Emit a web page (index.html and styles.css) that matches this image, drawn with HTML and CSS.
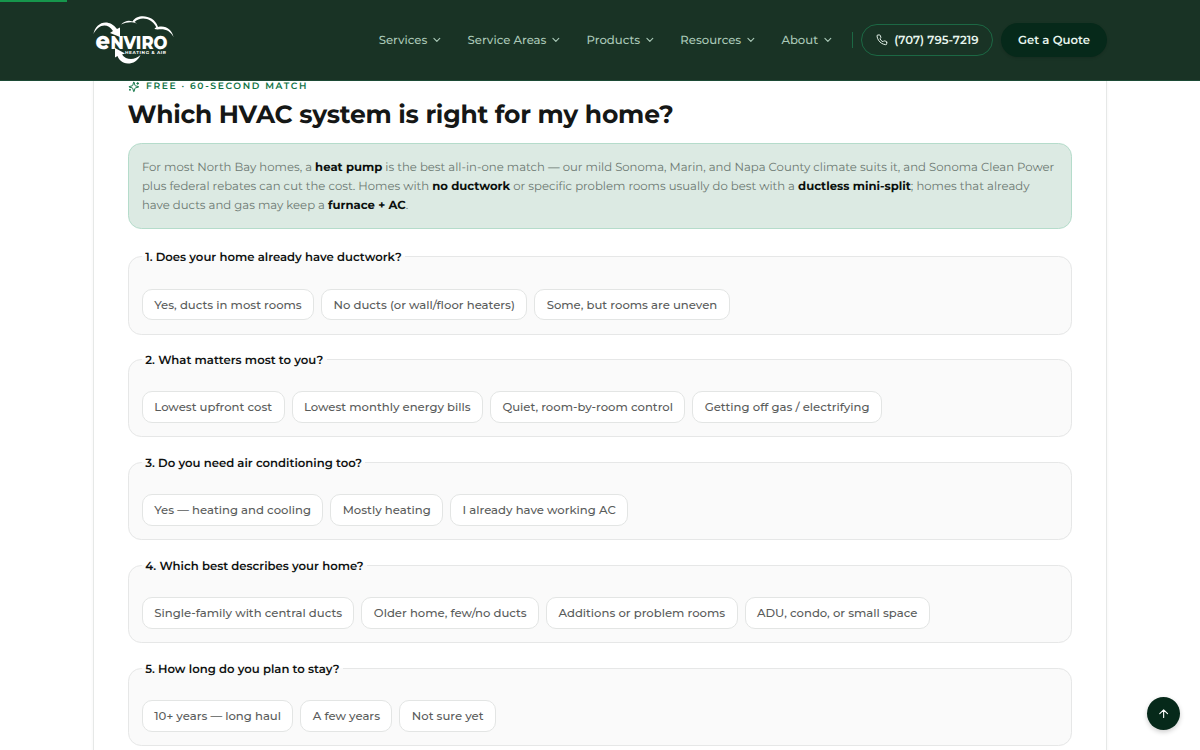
FILE: index.html
```html
<!DOCTYPE html>
<html lang="en">
<head>
    <meta charset="UTF-8">
    <meta name="viewport" content="width=device-width, initial-scale=1.0">
    <title>Which HVAC system is right for my home?</title>
    <link rel="stylesheet" href="styles.css">
</head>
<body>
    <header class="site-header">
        <div class="progress"></div>
        <div class="header-inner">
            <a class="logo" href="#" aria-label="Enviro Heating &amp; Air">
                <svg width="82" height="50" viewBox="0 0 82 50">
                    <path d="M0.5 19C2 8 15 2 24 14L27 12.5L27 22L17 18L20 16C14 7 5 10 0.5 19Z" fill="#fff"/>
                    <path d="M28 9.5C32 5.5 36 5 39.5 6.5C44 -1.5 61 -0.5 65 12C73 10 79 15 80.5 22C77 15.5 72 13.5 64.5 14.5L61.5 14C62 13 63 12.3 63.3 12.2C59 2.5 47 1 41.5 7L44 8.5C38 6.5 34 7 28 9.5Z" fill="#fff"/>
                    <path d="M22 33L32 38.5L29 39.5C33 45 41 46 47.5 40C45 46 40 48.5 35 48.5C29 48 26 45 24.5 41L22 42.5Z" fill="#fff"/>
                    <text class="logo-e" x="2.5" y="33.5" textLength="14.5" lengthAdjust="spacingAndGlyphs">e</text>
                    <text class="logo-name" x="17.5" y="33.5" textLength="57" lengthAdjust="spacingAndGlyphs">NVIRO</text>
                    <text class="logo-tag" x="32" y="39.3" textLength="41">HEATING &amp; AIR</text>
                </svg>
            </a>
            <nav class="nav">
                <a href="#">Services <svg class="chevron" viewBox="0 0 24 24"><path d="m6 9 6 6 6-6"/></svg></a>
                <a href="#">Service Areas <svg class="chevron" viewBox="0 0 24 24"><path d="m6 9 6 6 6-6"/></svg></a>
                <a href="#">Products <svg class="chevron" viewBox="0 0 24 24"><path d="m6 9 6 6 6-6"/></svg></a>
                <a href="#">Resources <svg class="chevron" viewBox="0 0 24 24"><path d="m6 9 6 6 6-6"/></svg></a>
                <a href="#">About <svg class="chevron" viewBox="0 0 24 24"><path d="m6 9 6 6 6-6"/></svg></a>
            </nav>
            <div class="header-actions">
                <a class="phone" href="tel:7077957219">
                    <svg class="icon" viewBox="0 0 24 24"><path d="M22 16.92v3a2 2 0 0 1-2.18 2 19.79 19.79 0 0 1-8.63-3.07 19.5 19.5 0 0 1-6-6 19.79 19.79 0 0 1-3.07-8.67A2 2 0 0 1 4.11 2h3a2 2 0 0 1 2 1.72c.13.96.36 1.9.7 2.81a2 2 0 0 1-.45 2.11L8.09 9.91a16 16 0 0 0 6 6l1.27-1.27a2 2 0 0 1 2.11-.45c.91.34 1.85.57 2.81.7A2 2 0 0 1 22 16.92z"/></svg>
                    <span>(707) 795-7219</span>
                </a>
                <a class="quote" href="#">Get a Quote</a>
            </div>
        </div>
    </header>

    <main class="card">
        <p class="eyebrow">
            <svg class="icon" viewBox="0 0 24 24"><path d="M9.94 15.5A2 2 0 0 0 8.5 14.06l-6.13-1.58a.5.5 0 0 1 0-.96L8.5 9.94A2 2 0 0 0 9.94 8.5l1.58-6.13a.5.5 0 0 1 .96 0L14.06 8.5A2 2 0 0 0 15.5 9.94l6.13 1.58a.5.5 0 0 1 0 .96L15.5 14.06a2 2 0 0 0-1.44 1.44l-1.58 6.13a.5.5 0 0 1-.96 0zM20 3v4M22 5h-4M4 17v2M5 18H3"/></svg>
            <span>FREE · 60-SECOND MATCH</span>
        </p>
        <h1>Which HVAC system is right for my home?</h1>
        <p class="answer">
            For most North Bay homes, a <strong>heat pump</strong> is the best all-in-one match — our mild Sonoma, Marin, and Napa County climate suits it, and Sonoma Clean Power
            plus federal rebates can cut the cost. Homes with <strong>no ductwork</strong> or specific problem rooms usually do best with a <strong>ductless mini-split</strong>; homes that already
            have ducts and gas may keep a <strong>furnace + AC</strong>.
        </p>

        <form class="questions">
            <fieldset>
                <legend>1. Does your home already have ductwork?</legend>
                <div class="options">
                    <button type="button">Yes, ducts in most rooms</button>
                    <button type="button">No ducts (or wall/floor heaters)</button>
                    <button type="button">Some, but rooms are uneven</button>
                </div>
            </fieldset>
            <fieldset>
                <legend>2. What matters most to you?</legend>
                <div class="options">
                    <button type="button">Lowest upfront cost</button>
                    <button type="button">Lowest monthly energy bills</button>
                    <button type="button">Quiet, room-by-room control</button>
                    <button type="button">Getting off gas / electrifying</button>
                </div>
            </fieldset>
            <fieldset>
                <legend>3. Do you need air conditioning too?</legend>
                <div class="options">
                    <button type="button">Yes — heating and cooling</button>
                    <button type="button">Mostly heating</button>
                    <button type="button">I already have working AC</button>
                </div>
            </fieldset>
            <fieldset>
                <legend>4. Which best describes your home?</legend>
                <div class="options">
                    <button type="button">Single-family with central ducts</button>
                    <button type="button">Older home, few/no ducts</button>
                    <button type="button">Additions or problem rooms</button>
                    <button type="button">ADU, condo, or small space</button>
                </div>
            </fieldset>
            <fieldset>
                <legend>5. How long do you plan to stay?</legend>
                <div class="options">
                    <button type="button">10+ years — long haul</button>
                    <button type="button">A few years</button>
                    <button type="button">Not sure yet</button>
                </div>
            </fieldset>
        </form>
    </main>

    <a class="to-top" href="#" aria-label="Back to top">
        <svg class="icon" viewBox="0 0 24 24"><path d="m5 12 7-7 7 7M12 19V5"/></svg>
    </a>
</body>
</html>
```
FILE: styles.css
```css
* {
    box-sizing: border-box;
}
body {
    margin: 0;
    height: 750px;
    overflow: hidden;
    font-family: Montserrat, Inter, sans-serif;
    font-size: 11.67px;
    text-rendering: geometricPrecision;
    color: #0f1211;
    background-color: #fff;
}
a {
    color: inherit;
    text-decoration: none;
}
svg {
    flex: none;
}
.icon, .chevron {
    fill: none;
    stroke: currentColor;
    stroke-width: 2;
    stroke-linecap: round;
    stroke-linejoin: round;
}

/* header */
.site-header {
    position: relative;
    height: 81px;
    background-color: #193325;
    border-bottom: 1px solid #1c4a35;
}
.progress {
    position: absolute;
    top: 0;
    left: 0;
    width: 67px;
    height: 2px;
    background-color: #16964c;
}
.header-inner {
    display: flex;
    align-items: center;
    width: 1013.4px;
    height: 80px;
    margin: 0 auto;
}
.logo {
    height: 50px;
}
.logo svg {
    display: block;
    overflow: visible;
}
.logo text {
    fill: #fff;
    font-weight: 800;
}
.logo .logo-e {
    font-size: 24px;
}
.logo .logo-name {
    font-size: 18.5px;
}
.logo .logo-tag {
    font-size: 4.3px;
    font-weight: 700;
}
.nav {
    display: flex;
    gap: 25px;
    margin-left: auto;
    padding-right: 19px;
    color: #a9c8b7;
    font-weight: 500;
    line-height: 17px;
}
.nav a {
    display: flex;
    align-items: center;
    gap: 3.5px;
}
.chevron {
    width: 11.7px;
    height: 11.7px;
    stroke-width: 2.4;
}
.header-actions {
    display: flex;
    align-items: center;
    gap: 8px;
    padding-left: 9px;
    color: #e8f6ee;
    font-weight: 600;
    line-height: 17px;
    background: linear-gradient(#1c6844, #1c6844) left center / 1px 16px no-repeat;
}
.phone {
    display: flex;
    align-items: center;
    justify-content: center;
    gap: 6.7px;
    width: 132px;
    height: 32px;
    border: 1px solid #1c6844;
    border-radius: 16px;
}
.phone .icon {
    width: 11.7px;
    height: 11.7px;
}
.quote {
    display: flex;
    align-items: center;
    justify-content: center;
    width: 105.5px;
    height: 34px;
    border-radius: 17px;
    background-color: #06291a;
    box-shadow: 0 1px 3px rgba(0, 0, 0, 0.15);
}

/* quiz */
.card {
    width: 1013.4px;
    height: 700px;
    margin: 0 auto;
    padding: 0 33.3px;
    border: 1px solid #e6e8e7;
    border-width: 0 1px;
    box-shadow: 0 0 3px rgba(0, 0, 0, 0.05);
}
.eyebrow {
    display: flex;
    align-items: center;
    gap: 6.7px;
    height: 12px;
    margin: 0;
    color: #0f7446;
    font-size: 9.17px;
    font-weight: 600;
    line-height: 12px;
    letter-spacing: 1.65px;
}
.eyebrow .icon {
    width: 11.7px;
    height: 11.7px;
}
h1 {
    margin: 6px 0 11px;
    font-size: 25px;
    font-weight: 700;
    line-height: 33px;
    letter-spacing: -0.25px;
    color: #151716;
}
.answer {
    height: 86px;
    margin: 0 0 19.4px;
    padding: 14px 13.3px;
    border: 1px solid #b5dccb;
    border-radius: 13.3px;
    background-color: #dceae3;
    color: #6c7972;
    line-height: 19.1px;
}
.answer strong {
    color: #0b100d;
    font-weight: 700;
}
fieldset {
    min-width: 0;
    margin: 0 0 16.5px;
    padding: 13.3px;
    border: 1px solid #e6e7e7;
    border-radius: 13.3px;
    background-color: #fafafa;
}
legend {
    padding: 0 3.3px;
    height: 17px;
    line-height: 18px;
    font-weight: 600;
}
.options {
    display: flex;
    gap: 7px;
    margin-top: 10px;
}
button {
    height: 31.7px;
    padding: 0 11.4px;
    border: 1px solid #e3e5e4;
    border-radius: 10px;
    background-color: #fff;
    color: #5a5c5b;
    font: inherit;
    font-weight: 500;
    white-space: nowrap;
}

.to-top {
    position: fixed;
    right: 20px;
    bottom: 20px;
    display: flex;
    align-items: center;
    justify-content: center;
    width: 33.4px;
    height: 33.4px;
    border-radius: 50%;
    background-color: #06291a;
    color: #fff;
    box-shadow: 0 2px 5px rgba(0, 0, 0, 0.2);
}
.to-top .icon {
    width: 13.3px;
    height: 13.3px;
}
```
